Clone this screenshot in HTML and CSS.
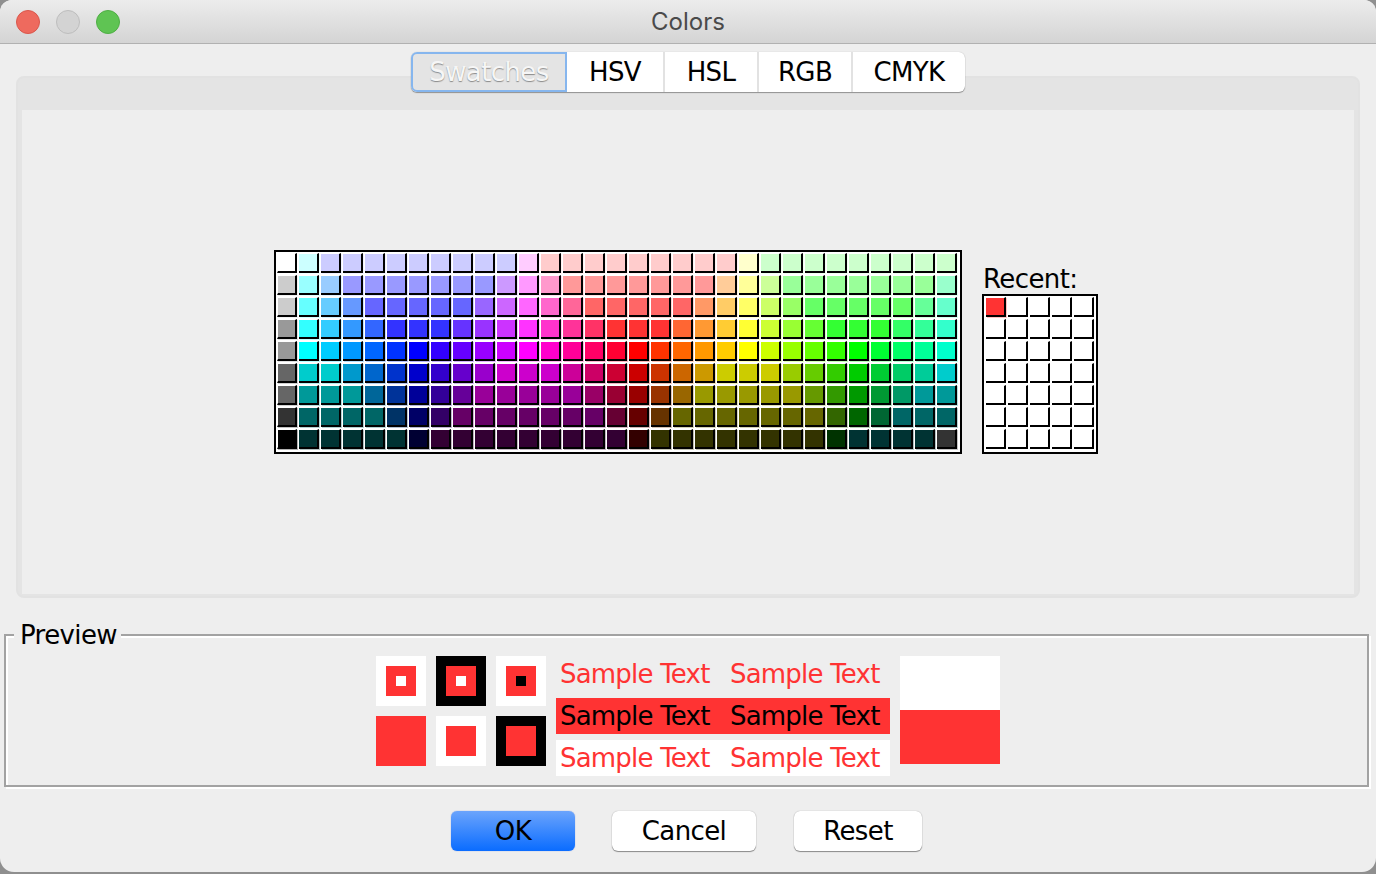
FILE: index.html
```html
<!DOCTYPE html>
<html lang="en">
<head>
<meta charset="utf-8">
<title>Colors</title>
<link rel="stylesheet" href="styles.css">
</head>
<body>
<div class="window">
  <header class="titlebar">
    <div class="lights"><span class="light red"></span><span class="light gray"></span><span class="light green"></span></div>
    <div class="title">Colors</div>
  </header>
  <nav class="tabs">
    <div class="tab selected">Swatches</div>
    <div class="tab hsv">HSV</div>
    <div class="tab hsl">HSL</div>
    <div class="tab rgb">RGB</div>
    <div class="tab cmyk">CMYK</div>
  </nav>
  <section class="panel">
    <div class="panel-head"></div>
    <div class="panel-body">
      <div class="palette">
<i style="--c:#fff"></i><i style="--c:#cff"></i><i style="--c:#ccf"></i><i style="--c:#ccf"></i><i style="--c:#ccf"></i><i style="--c:#ccf"></i><i style="--c:#ccf"></i><i style="--c:#ccf"></i><i style="--c:#ccf"></i><i style="--c:#ccf"></i><i style="--c:#ccf"></i><i style="--c:#fcf"></i><i style="--c:#fcc"></i><i style="--c:#fcc"></i><i style="--c:#fcc"></i><i style="--c:#fcc"></i><i style="--c:#fcc"></i><i style="--c:#fcc"></i><i style="--c:#fcc"></i><i style="--c:#fcc"></i><i style="--c:#fcc"></i><i style="--c:#ffc"></i><i style="--c:#cfc"></i><i style="--c:#cfc"></i><i style="--c:#cfc"></i><i style="--c:#cfc"></i><i style="--c:#cfc"></i><i style="--c:#cfc"></i><i style="--c:#cfc"></i><i style="--c:#cfc"></i><i style="--c:#cfc"></i>
<i style="--c:#ccc"></i><i style="--c:#9ff"></i><i style="--c:#9cf"></i><i style="--c:#99f"></i><i style="--c:#99f"></i><i style="--c:#99f"></i><i style="--c:#99f"></i><i style="--c:#99f"></i><i style="--c:#99f"></i><i style="--c:#99f"></i><i style="--c:#c9f"></i><i style="--c:#f9f"></i><i style="--c:#f9c"></i><i style="--c:#f99"></i><i style="--c:#f99"></i><i style="--c:#f99"></i><i style="--c:#f99"></i><i style="--c:#f99"></i><i style="--c:#f99"></i><i style="--c:#f99"></i><i style="--c:#fc9"></i><i style="--c:#ff9"></i><i style="--c:#cf9"></i><i style="--c:#9f9"></i><i style="--c:#9f9"></i><i style="--c:#9f9"></i><i style="--c:#9f9"></i><i style="--c:#9f9"></i><i style="--c:#9f9"></i><i style="--c:#9f9"></i><i style="--c:#9fc"></i>
<i style="--c:#ccc"></i><i style="--c:#6ff"></i><i style="--c:#6cf"></i><i style="--c:#69f"></i><i style="--c:#66f"></i><i style="--c:#66f"></i><i style="--c:#66f"></i><i style="--c:#66f"></i><i style="--c:#66f"></i><i style="--c:#96f"></i><i style="--c:#c6f"></i><i style="--c:#f6f"></i><i style="--c:#f6c"></i><i style="--c:#f69"></i><i style="--c:#f66"></i><i style="--c:#f66"></i><i style="--c:#f66"></i><i style="--c:#f66"></i><i style="--c:#f66"></i><i style="--c:#f96"></i><i style="--c:#fc6"></i><i style="--c:#ff6"></i><i style="--c:#cf6"></i><i style="--c:#9f6"></i><i style="--c:#6f6"></i><i style="--c:#6f6"></i><i style="--c:#6f6"></i><i style="--c:#6f6"></i><i style="--c:#6f6"></i><i style="--c:#6f9"></i><i style="--c:#6fc"></i>
<i style="--c:#999"></i><i style="--c:#3ff"></i><i style="--c:#3cf"></i><i style="--c:#39f"></i><i style="--c:#36f"></i><i style="--c:#33f"></i><i style="--c:#33f"></i><i style="--c:#33f"></i><i style="--c:#63f"></i><i style="--c:#93f"></i><i style="--c:#c3f"></i><i style="--c:#f3f"></i><i style="--c:#f3c"></i><i style="--c:#f39"></i><i style="--c:#f36"></i><i style="--c:#f33"></i><i style="--c:#f33"></i><i style="--c:#f33"></i><i style="--c:#f63"></i><i style="--c:#f93"></i><i style="--c:#fc3"></i><i style="--c:#ff3"></i><i style="--c:#cf3"></i><i style="--c:#9f3"></i><i style="--c:#6f3"></i><i style="--c:#3f3"></i><i style="--c:#3f3"></i><i style="--c:#3f3"></i><i style="--c:#3f6"></i><i style="--c:#3f9"></i><i style="--c:#3fc"></i>
<i style="--c:#999"></i><i style="--c:#0ff"></i><i style="--c:#0cf"></i><i style="--c:#09f"></i><i style="--c:#06f"></i><i style="--c:#03f"></i><i style="--c:#00f"></i><i style="--c:#30f"></i><i style="--c:#60f"></i><i style="--c:#90f"></i><i style="--c:#c0f"></i><i style="--c:#f0f"></i><i style="--c:#f0c"></i><i style="--c:#f09"></i><i style="--c:#f06"></i><i style="--c:#f03"></i><i style="--c:#f00"></i><i style="--c:#f30"></i><i style="--c:#f60"></i><i style="--c:#f90"></i><i style="--c:#fc0"></i><i style="--c:#ff0"></i><i style="--c:#cf0"></i><i style="--c:#9f0"></i><i style="--c:#6f0"></i><i style="--c:#3f0"></i><i style="--c:#0f0"></i><i style="--c:#0f3"></i><i style="--c:#0f6"></i><i style="--c:#0f9"></i><i style="--c:#0fc"></i>
<i style="--c:#666"></i><i style="--c:#0cc"></i><i style="--c:#0cc"></i><i style="--c:#09c"></i><i style="--c:#06c"></i><i style="--c:#03c"></i><i style="--c:#00c"></i><i style="--c:#30c"></i><i style="--c:#60c"></i><i style="--c:#90c"></i><i style="--c:#c0c"></i><i style="--c:#c0c"></i><i style="--c:#c0c"></i><i style="--c:#c09"></i><i style="--c:#c06"></i><i style="--c:#c03"></i><i style="--c:#c00"></i><i style="--c:#c30"></i><i style="--c:#c60"></i><i style="--c:#c90"></i><i style="--c:#cc0"></i><i style="--c:#cc0"></i><i style="--c:#cc0"></i><i style="--c:#9c0"></i><i style="--c:#6c0"></i><i style="--c:#3c0"></i><i style="--c:#0c0"></i><i style="--c:#0c3"></i><i style="--c:#0c6"></i><i style="--c:#0c9"></i><i style="--c:#0cc"></i>
<i style="--c:#666"></i><i style="--c:#099"></i><i style="--c:#099"></i><i style="--c:#099"></i><i style="--c:#069"></i><i style="--c:#039"></i><i style="--c:#009"></i><i style="--c:#309"></i><i style="--c:#609"></i><i style="--c:#909"></i><i style="--c:#909"></i><i style="--c:#909"></i><i style="--c:#909"></i><i style="--c:#909"></i><i style="--c:#906"></i><i style="--c:#903"></i><i style="--c:#900"></i><i style="--c:#930"></i><i style="--c:#960"></i><i style="--c:#990"></i><i style="--c:#990"></i><i style="--c:#990"></i><i style="--c:#990"></i><i style="--c:#990"></i><i style="--c:#690"></i><i style="--c:#390"></i><i style="--c:#090"></i><i style="--c:#093"></i><i style="--c:#096"></i><i style="--c:#099"></i><i style="--c:#099"></i>
<i style="--c:#333"></i><i style="--c:#066"></i><i style="--c:#066"></i><i style="--c:#066"></i><i style="--c:#066"></i><i style="--c:#036"></i><i style="--c:#006"></i><i style="--c:#306"></i><i style="--c:#606"></i><i style="--c:#606"></i><i style="--c:#606"></i><i style="--c:#606"></i><i style="--c:#606"></i><i style="--c:#606"></i><i style="--c:#606"></i><i style="--c:#603"></i><i style="--c:#600"></i><i style="--c:#630"></i><i style="--c:#660"></i><i style="--c:#660"></i><i style="--c:#660"></i><i style="--c:#660"></i><i style="--c:#660"></i><i style="--c:#660"></i><i style="--c:#660"></i><i style="--c:#360"></i><i style="--c:#060"></i><i style="--c:#063"></i><i style="--c:#066"></i><i style="--c:#066"></i><i style="--c:#066"></i>
<i style="--c:#000"></i><i style="--c:#033"></i><i style="--c:#033"></i><i style="--c:#033"></i><i style="--c:#033"></i><i style="--c:#033"></i><i style="--c:#003"></i><i style="--c:#303"></i><i style="--c:#303"></i><i style="--c:#303"></i><i style="--c:#303"></i><i style="--c:#303"></i><i style="--c:#303"></i><i style="--c:#303"></i><i style="--c:#303"></i><i style="--c:#303"></i><i style="--c:#300"></i><i style="--c:#330"></i><i style="--c:#330"></i><i style="--c:#330"></i><i style="--c:#330"></i><i style="--c:#330"></i><i style="--c:#330"></i><i style="--c:#330"></i><i style="--c:#330"></i><i style="--c:#030"></i><i style="--c:#033"></i><i style="--c:#033"></i><i style="--c:#033"></i><i style="--c:#033"></i><i style="--c:#333"></i>
      </div>
      <div class="recent">
        <div class="recent-label">Recent:</div>
        <div class="recent-grid">
<i style="--c:#f33"></i><i></i><i></i><i></i><i></i>
<i></i><i></i><i></i><i></i><i></i>
<i></i><i></i><i></i><i></i><i></i>
<i></i><i></i><i></i><i></i><i></i>
<i></i><i></i><i></i><i></i><i></i>
<i></i><i></i><i></i><i></i><i></i>
<i></i><i></i><i></i><i></i><i></i>
        </div>
      </div>
    </div>
  </section>
  <section class="preview">
    <div class="legend">Preview</div>
    <div class="squares">
      <div class="sq bg-white"><div class="mid"><div class="dot dot-white"></div></div></div>
      <div class="sq bg-black"><div class="mid"><div class="dot dot-white"></div></div></div>
      <div class="sq bg-white"><div class="mid"><div class="dot dot-black"></div></div></div>
      <div class="sq bg-red"></div>
      <div class="sq bg-white"><div class="mid"></div></div>
      <div class="sq bg-black"><div class="mid"></div></div>
    </div>
    <div class="samples">
      <div class="sample plain"><span>Sample Text</span><span>Sample Text</span></div>
      <div class="sample on-red"><span>Sample Text</span><span>Sample Text</span></div>
      <div class="sample on-white"><span>Sample Text</span><span>Sample Text</span></div>
    </div>
    <div class="flag"><div class="flag-white"></div><div class="flag-red"></div></div>
  </section>
  <footer class="buttons">
    <div class="btn ok">OK</div>
    <div class="btn cancel">Cancel</div>
    <div class="btn reset">Reset</div>
  </footer>
</div>
</body>
</html>
```
FILE: styles.css
```css
* { box-sizing: border-box; }
html, body { margin: 0; height: 100%; }
body {
  background: #8f8f8f;
  font-family: "DejaVu Sans", sans-serif;
  font-size: 26px;
  color: #000;
  overflow: hidden;
}
.window {
  width: 1376px;
  height: 872px;
  background: #eeeeee;
  border-radius: 12px 12px 14px 14px;
  display: flex;
  flex-direction: column;
  overflow: hidden;
}
.titlebar {
  height: 44px;
  flex: none;
  display: flex;
  align-items: center;
  justify-content: center;
  position: relative;
  background: linear-gradient(#ececec, #d4d4d4);
  border-bottom: 1px solid #b1b1b1;
}
.lights {
  position: absolute;
  left: 16px;
  top: 10px;
  display: flex;
  gap: 16px;
}
.light { width: 24px; height: 24px; border-radius: 50%; border: 1px solid; }
.light.red { background: #ee6a5e; border-color: #d9574c; }
.light.gray { background: #d3d3d3; border-color: #bdbdbd; }
.light.green { background: #5fc453; border-color: #4fae45; }
.title {
  font-family: "Inter", sans-serif;
  font-size: 24px;
  color: #4a4a4a;
  margin-top: -1px;
}
.tabs {
  flex: none;
  display: flex;
  align-self: flex-start;
  margin: 8px 0 -16px 411px;
  height: 40px;
  position: relative;
  z-index: 1;
  background: #fff;
  border-radius: 6px;
  box-shadow: 0 1px 1px rgba(0,0,0,.35), 0 0 1px rgba(0,0,0,.25);
}
.tab {
  display: flex;
  align-items: center;
  justify-content: center;
  border-left: 2px solid #e2e2e2;
  letter-spacing: -0.6px;
  font-size: 26px;
}
.tab.selected {
  width: 156px;
  border: 2px solid #86b6ee;
  border-radius: 6px 0 0 6px;
  background: #e4e4e4;
  color: #f6f6f6;
  text-shadow: 0 1px 1px #8a8a8a;
}
.tab.selected + .tab { border-left: 0; }
.tab.hsv { width: 96px; }
.tab.hsl { width: 94px; }
.tab.rgb { width: 94px; }
.tab.cmyk { width: 114px; }
.panel {
  flex: none;
  margin: 0 16px;
  height: 522px;
  border: 2px solid #e2e2e2;
  border-radius: 8px;
  background: #e4e4e4;
  display: flex;
  flex-direction: column;
}
.panel-head { height: 32px; flex: none; }
.panel-body {
  flex: 1;
  margin: 0 4px 2px;
  background: #eeeeee;
  display: flex;
  justify-content: center;
  align-items: center;
  gap: 20px;
  padding-right: 4px;
}
.palette {
  width: 688px;
  height: 204px;
  flex: none;
  background: #fff;
  border: 2px solid #000;
  padding: 1px 0 0 1px;
  display: grid;
  grid-template-columns: repeat(31, 22px);
  grid-auto-rows: 22px;
  overflow: hidden;
}
.palette i, .recent-grid i {
  display: block;
  width: 20px;
  height: 20px;
  background: var(--c, #fff);
  border-top: 1px solid #fff;
  border-right: 2px solid #000;
  border-bottom: 2px solid #000;
  box-shadow: 1px 1px 0 color-mix(in srgb, var(--c, #fff) 30%, #fff);
}
.palette i:nth-child(31n+1) { border-left: 1px solid #fff; }
.recent {
  width: 116px;
  height: 204px;
  flex: none;
  display: flex;
  flex-direction: column;
  justify-content: flex-end;
}
.recent-label {
  height: 30px;
  line-height: 30px;
  padding-left: 1px;
  letter-spacing: -0.6px;
}
.recent-grid {
  height: 160px;
  background: #fff;
  border: 2px solid #000;
  padding: 1px 0 0 2px;
  display: grid;
  grid-template-columns: repeat(5, 22px);
  grid-auto-rows: 22px;
}
.preview {
  flex: none;
  position: relative;
  margin: 36px 0 0 4px;
  width: 1365px;
  height: 153px;
  border: 2px solid #a2a2a2;
  box-shadow: 2px 2px 0 #fff, inset 2px 2px 0 #fff;
  display: flex;
  justify-content: center;
  align-items: flex-start;
  padding: 20px 0 0 3px;
}
.legend {
  position: absolute;
  left: 8px;
  top: -16px;
  padding: 0 4px 0 6px;
  height: 30px;
  line-height: 30px;
  background: #eeeeee;
  letter-spacing: -0.6px;
}
.squares {
  display: grid;
  grid-template-columns: repeat(3, 50px);
  grid-auto-rows: 50px;
  gap: 10px;
}
.sq { display: flex; align-items: center; justify-content: center; }
.bg-white { background: #fff; }
.bg-black { background: #000; }
.bg-red { background: #ff3333; }
.mid {
  width: 30px;
  height: 30px;
  background: #ff3333;
  display: flex;
  align-items: center;
  justify-content: center;
}
.dot { width: 10px; height: 10px; }
.dot-white { background: #fff; }
.dot-black { background: #000; }
.samples {
  margin-left: 10px;
  width: 334px;
  display: flex;
  flex-direction: column;
  gap: 6px;
}
.sample {
  height: 36px;
  line-height: 36px;
  padding-left: 4px;
  display: flex;
  gap: 16px;
  letter-spacing: -0.8px;
  color: #ff3333;
}
.sample span { width: 154px; white-space: nowrap; }
.on-red { background: #ff3333; color: #000; }
.on-white { background: #fff; }
.flag { margin-left: 10px; width: 100px; }
.flag-white { height: 54px; background: #fff; }
.flag-red { height: 54px; background: #ff3333; }
.buttons {
  flex: none;
  margin-top: 24px;
  display: flex;
  justify-content: center;
  padding-right: 3px;
}
.btn {
  height: 40px;
  display: flex;
  align-items: center;
  justify-content: center;
  border-radius: 6px;
  background: #fff;
  letter-spacing: -0.6px;
  box-shadow: 0 1px 1px rgba(0,0,0,.4), 0 0 1px rgba(0,0,0,.35);
}
.btn.ok {
  width: 124px;
  background: linear-gradient(#6ba4fc, #0a6cff);
  box-shadow: 0 0 1px rgba(0,60,200,.6);
}
.btn.cancel { width: 144px; margin-left: 37px; }
.btn.reset { width: 128px; margin-left: 38px; }
```
